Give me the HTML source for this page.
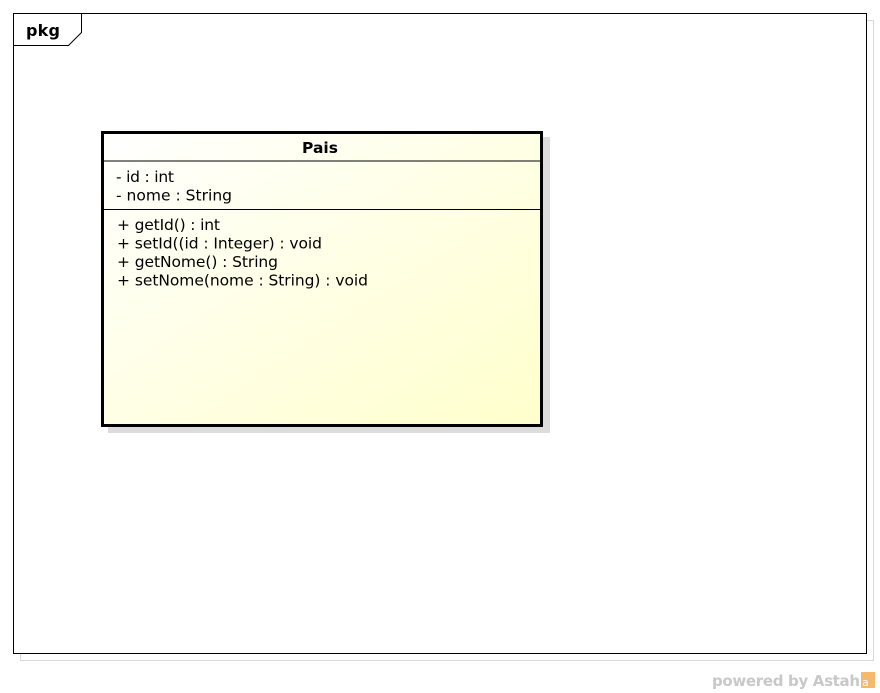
<!DOCTYPE html>
<html><head><style>
html,body{margin:0;padding:0;background:#fff;width:880px;height:693px;overflow:hidden}
svg{display:block}
text{font-family:"DejaVu Sans","Liberation Sans",sans-serif}
</style></head><body>
<svg width="880" height="693" viewBox="0 0 880 693" xmlns="http://www.w3.org/2000/svg">
<defs>
<linearGradient id="g" x1="0" y1="0" x2="1" y2="1">
<stop offset="0" stop-color="#ffffff"/>
<stop offset="1" stop-color="#ffffcc"/>
</linearGradient>
</defs>
<rect x="20.5" y="20.5" width="853" height="640" fill="none" stroke="#d8d8d8" stroke-width="1"/>
<rect x="13.5" y="13.5" width="853" height="640" fill="#fff" stroke="#000" stroke-width="1"/>
<polyline points="13.5,45.5 68.5,45.5 81.5,32.5 81.5,13.5" fill="none" stroke="#000" stroke-width="1"/>
<text x="26" y="36" font-size="16" font-weight="bold" textLength="34">pkg</text>
<rect x="108" y="137" width="442" height="296" fill="#dcdcdc"/>
<rect x="102.5" y="132.5" width="439" height="293" fill="url(#g)" stroke="#000" stroke-width="3"/>
<line x1="103" y1="161" x2="541" y2="161" stroke="#000" stroke-width="1"/>
<line x1="103" y1="209.5" x2="541" y2="209.5" stroke="#000" stroke-width="1"/>
<text x="302" y="153" font-size="15.5" font-weight="bold" textLength="36">Pais</text>
<g font-size="15.5">
<text x="116" y="182" textLength="58">- id : int</text>
<text x="116" y="200.5" textLength="116">- nome : String</text>
<text x="117" y="230" textLength="103">+ getId() : int</text>
<text x="117" y="248.5" textLength="205">+ setId((id : Integer) : void</text>
<text x="117" y="267" textLength="161">+ getNome() : String</text>
<text x="117" y="285.5" textLength="251">+ setNome(nome : String) : void</text>
</g>
<text x="712" y="686" font-size="15" font-weight="bold" fill="#c8c8c8" textLength="148">powered by Astah</text>
<rect x="861" y="672" width="14" height="16" fill="#f5b96e"/>
<text x="862" y="686" font-size="11" fill="#fff">a</text>
</svg>
</body></html>
